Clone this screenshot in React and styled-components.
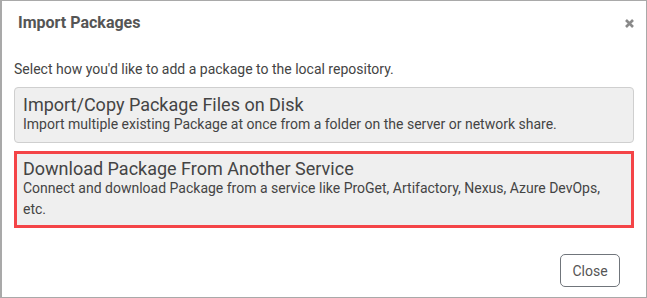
import React from 'react';
import styled, { createGlobalStyle } from 'styled-components';

const GlobalStyle = createGlobalStyle`
  html, body {
    margin: 0;
    padding: 0;
    background: #fff;
  }
  body {
    font-family: Roboto, "Liberation Sans", Arial, sans-serif;
    color: #444;
  }
`;

const options = [
  {
    id: 'disk',
    title: 'Import/Copy Package Files on Disk',
    text: 'Import multiple existing Package at once from a folder on the server or network share.',
  },
  {
    id: 'service',
    title: 'Download Package From Another Service',
    text: 'Connect and download Package from a service like ProGet, Artifactory, Nexus, Azure DevOps, etc.',
    highlighted: true,
  },
];

function CloseIcon() {
  return (
    <svg width="9" height="9" viewBox="0 0 9 9">
      <path d="M1 1 L8 8 M8 1 L1 8" stroke="#8a8a8a" strokeWidth="2.6" strokeLinecap="butt" />
    </svg>
  );
}

export default function App() {
  return (
    <>
      <GlobalStyle />
      <Dialog>
        <Header>
          <Title>Import Packages</Title>
          <CloseX aria-label="close"><CloseIcon /></CloseX>
        </Header>

        <Body>
          <Intro>Select how you'd like to add a package to the local repository.</Intro>
          <OptionList>
            {options.map((o) => (
              <Option key={o.id} $highlighted={o.highlighted}>
                <OptionTitle>{o.title}</OptionTitle>
                <OptionText>{o.text}</OptionText>
              </Option>
            ))}
          </OptionList>
        </Body>

        <Footer>
          <Button>Close</Button>
        </Footer>
      </Dialog>
    </>
  );
}

const Dialog = styled.div`
  box-sizing: border-box;
  width: 647px;
  height: 298px;
  border: 1px solid #a9a9a9;
  border-left-width: 2px;
  background: #fff;
  display: flex;
  flex-direction: column;
`

const Header = styled.div`
  display: flex;
  align-items: flex-start;
  justify-content: space-between;
  padding: 11px 12px 0 16px;
  height: 22px;
`

const Title = styled.h4`
  margin: 0;
  font-size: 16px;
  line-height: 22px;
  font-weight: 700;
  color: #555;
`

const CloseX = styled.span`
  display: flex;
  margin-top: 7px;
`

const Body = styled.div`
  padding: 25px 12px 0 12px;
`

const Intro = styled.p`
  margin: 0 0 8px 0;
  font-size: 14px;
  line-height: 20px;
  color: #444;
`

const OptionList = styled.div`
  display: flex;
  flex-direction: column;
  gap: 8px;
`

const Option = styled.div`
  background: #efefef;
  border: ${(p) => (p.$highlighted ? '3px solid #f44447' : '1px solid #cfcfcf')};
  border-radius: ${(p) => (p.$highlighted ? '0' : '4px')};
  padding: ${(p) => (p.$highlighted ? '6px 6px 5px 6px' : '8px 8px 7px 8px')};
`

const OptionTitle = styled.div`
  font-size: 18px;
  line-height: 18px;
  color: #444;
`

const OptionText = styled.div`
  font-size: 14px;
  line-height: 21px;
  color: #444;
`

const Footer = styled.div`
  margin-top: auto;
  display: flex;
  justify-content: flex-end;
  padding: 0 26px 10px 0;
`

const Button = styled.button`
  box-sizing: border-box;
  width: 60px;
  height: 33px;
  border: 1px solid #70757b;
  border-radius: 5px;
  background: #fff;
  font-family: Roboto, "Liberation Sans", Arial, sans-serif;
  font-size: 14px;
  color: #555;
  padding: 0;
`
